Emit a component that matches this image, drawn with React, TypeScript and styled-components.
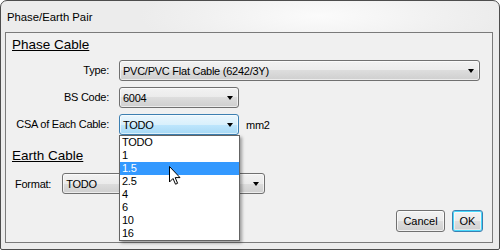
import React from "react";
import styled, { createGlobalStyle, css } from "styled-components";

const Global = createGlobalStyle`
  html, body { margin: 0; padding: 0; background: #ffffff; }
  body { font-family: "Liberation Sans", Arial, sans-serif; color: #000; }
  * { box-sizing: border-box; }
`;

const Window = styled.div`
  position: relative;
  width: 500px;
  height: 250px;
  display: flex;
  flex-direction: column;
  border: 1px solid #4d4d4d;
  border-radius: 7px 7px 2px 2px;
  background: radial-gradient(ellipse 180px 40px at 64% 6%, #fbfbfb 0%, #f0f0f0 70%, #ececec 100%);
  overflow: hidden;
  padding: 0 6px 6px 4px;
`;

const TitleBar = styled.div`
  height: 31px;
  flex: none;
  padding: 9px 0 0 2px;
  font-size: 11.3px;
  line-height: 14px;
  color: #000;
`;

const GroupBox = styled.div`
  flex: 1;
  display: flex;
  flex-direction: column;
  border: 1px solid #7a7a7a;
  background: #f0f0f0;
  padding: 4px 9px 10px 0;
`;

const Heading = styled.div<{ $gap: number }>`
  margin: ${(p) => p.$gap}px 0 0 6px;
  font-size: 13.5px;
  line-height: 16px;
  text-decoration: underline;
  text-underline-offset: 1px;
`;

const FieldGrid = styled.div`
  margin-top: 7px;
  display: grid;
  grid-template-columns: 103px auto;
  column-gap: 10px;
  row-gap: 6px;
  align-items: center;
  justify-items: start;
`;

const Label = styled.span`
  justify-self: end;
  font-size: 11px;
  letter-spacing: -0.25px;
  line-height: 13px;
`;

const SelectCell = styled.div`
  display: flex;
  align-items: center;
  gap: 7px;
  font-size: 11px;
  letter-spacing: -0.25px;
`;

const SelectBox = styled.div<{ $w: number; $focused?: boolean }>`
  position: relative;
  width: ${(p) => p.$w}px;
  height: 21px;
  display: flex;
  align-items: center;
  padding: 0 0 0 3px;
  border: 1px solid #707070;
  border-radius: 3px;
  font-size: 11px;
  letter-spacing: -0.25px;
  background: linear-gradient(#f2f2f2 0%, #ebebeb 50%, #dddddd 50%, #cfcfcf 100%);
  box-shadow: inset 0 0 0 1px rgba(255, 255, 255, 0.6);
  ${(p) =>
    p.$focused &&
    css`
      border-color: #3c7fb1;
      background: linear-gradient(#eaf6fd 0%, #d9f0fc 50%, #bee6fd 50%, #a7d9f5 100%);
    `}
`;

const Arrow = styled.span`
  position: absolute;
  right: 5px;
  top: 8px;
  width: 0;
  height: 0;
  border-left: 3.5px solid transparent;
  border-right: 3.5px solid transparent;
  border-top: 4px solid #000;
`;

const DropList = styled.div`
  position: absolute;
  top: calc(100% + 1px);
  left: -1px;
  width: calc(100% + 3px);
  border: 1px solid #646464;
  background: #ffffff;
  box-shadow: 2px 2px 3px rgba(0, 0, 0, 0.35);
  z-index: 10;
`;

const DropItem = styled.div<{ $selected?: boolean }>`
  height: 13px;
  line-height: 13px;
  padding-left: 2px;
  font-size: 11px;
  letter-spacing: -0.25px;
  color: ${(p) => (p.$selected ? "#ffffff" : "#000")};
  background: ${(p) => (p.$selected ? "#3399ff" : "transparent")};
`;

const Cursor = styled.svg`
  position: absolute;
  left: 49px;
  top: 30px;
  z-index: 11;
`;

const FormatRow = styled.div`
  margin-top: 9px;
  display: flex;
  align-items: center;
  gap: 11px;
  padding-left: 9px;
  font-size: 11px;
  letter-spacing: -0.25px;
`;

const ButtonRow = styled.div`
  margin-top: auto;
  display: flex;
  justify-content: flex-end;
  gap: 7px;
`;

const Button = styled.button<{ $w: number; $default?: boolean }>`
  width: ${(p) => p.$w}px;
  height: 22px;
  padding: 0;
  font-family: "Liberation Sans", Arial, sans-serif;
  font-size: 11px;
  color: #000;
  border: 1px solid #707070;
  border-radius: 3px;
  background: linear-gradient(#f2f2f2 0%, #ebebeb 50%, #dddddd 50%, #cfcfcf 100%);
  box-shadow: inset 0 0 0 1px rgba(255, 255, 255, 0.7);
  ${(p) =>
    p.$default &&
    css`
      border-color: #3c7fb1;
      box-shadow: inset 0 0 0 1px #48d8fb, inset 0 0 0 2px rgba(255, 255, 255, 0.5);
    `}
`;

const options = ["TODO", "1", "1.5", "2.5", "4", "6", "10", "16"];

export default function App() {
  return (
    <>
      <Global />
      <Window>
        <TitleBar>Phase/Earth Pair</TitleBar>
        <GroupBox>
          <Heading $gap={0}>Phase Cable</Heading>
          <FieldGrid>
            <Label>Type:</Label>
            <SelectBox $w={361}>
              PVC/PVC Flat Cable (6242/3Y)
              <Arrow />
            </SelectBox>
            <Label>BS Code:</Label>
            <SelectBox $w={120}>
              6004
              <Arrow />
            </SelectBox>
            <Label>CSA of Each Cable:</Label>
            <SelectCell>
              <SelectBox $w={120} $focused>
                TODO
                <Arrow />
                <DropList>
                  {options.map((o) => (
                    <DropItem key={o} $selected={o === "1.5"}>
                      {o}
                    </DropItem>
                  ))}
                  <Cursor width="12" height="19" viewBox="0 0 12 19">
                    <path
                      d="M0.5 0.5 L0.5 16 L4 12.5 L6.5 18.2 L8.6 17.3 L6.2 11.6 L11 11.6 Z"
                      fill="#fff"
                      stroke="#000"
                      strokeWidth="1"
                      strokeLinejoin="miter"
                    />
                  </Cursor>
                </DropList>
              </SelectBox>
              <span>mm2</span>
            </SelectCell>
          </FieldGrid>
          <Heading $gap={13}>Earth Cable</Heading>
          <FormatRow>
            <span>Format:</span>
            <SelectBox $w={203}>
              TODO
              <Arrow />
            </SelectBox>
          </FormatRow>
          <ButtonRow>
            <Button $w={49}>Cancel</Button>
            <Button $w={31} $default>
              OK
            </Button>
          </ButtonRow>
        </GroupBox>
      </Window>
    </>
  );
}
